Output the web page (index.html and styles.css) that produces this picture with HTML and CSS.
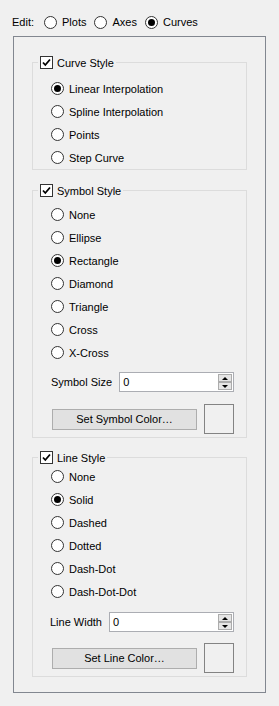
FILE: index.html
```html
<!DOCTYPE html>
<html lang="en">
<head>
	<meta charset="UTF-8">
	<title>Curve Properties</title>
	<link rel="stylesheet" href="styles.css">
</head>
<body>
	<div class="edit-row">
		<span class="edit-label">Edit:</span>
		<label class="option inline"><span class="radio"></span>Plots</label>
		<label class="option inline"><span class="radio"></span>Axes</label>
		<label class="option inline"><span class="radio checked"></span>Curves</label>
	</div>

	<div class="frame">
		<fieldset class="group group-curve">
			<legend>
				<label class="check"><span class="check-box"><svg width="11" height="11" viewBox="0 0 11 11"><path d="M2 5.5 L4.3 8 L9 2.5" fill="none" stroke="#000" stroke-width="1.8"/></svg></span>Curve Style</label>
			</legend>
			<div class="group-body">
				<label class="option"><span class="radio checked"></span>Linear Interpolation</label>
				<label class="option"><span class="radio"></span>Spline Interpolation</label>
				<label class="option"><span class="radio"></span>Points</label>
				<label class="option"><span class="radio"></span>Step Curve</label>
			</div>
		</fieldset>

		<fieldset class="group group-symbol">
			<legend>
				<label class="check"><span class="check-box"><svg width="11" height="11" viewBox="0 0 11 11"><path d="M2 5.5 L4.3 8 L9 2.5" fill="none" stroke="#000" stroke-width="1.8"/></svg></span>Symbol Style</label>
			</legend>
			<div class="group-body">
				<label class="option"><span class="radio"></span>None</label>
				<label class="option"><span class="radio"></span>Ellipse</label>
				<label class="option"><span class="radio checked"></span>Rectangle</label>
				<label class="option"><span class="radio"></span>Diamond</label>
				<label class="option"><span class="radio"></span>Triangle</label>
				<label class="option"><span class="radio"></span>Cross</label>
				<label class="option"><span class="radio"></span>X-Cross</label>

				<div class="field">
					<span class="field-label">Symbol Size</span>
					<div class="spin">
						<span class="spin-value">0</span>
						<span class="spin-buttons">
							<span class="spin-btn"><span class="arrow-up"></span></span>
							<span class="spin-btn"><span class="arrow-down"></span></span>
						</span>
					</div>
				</div>

				<div class="color-row">
					<button class="color-btn">Set Symbol Color…</button>
					<span class="swatch"></span>
				</div>
			</div>
		</fieldset>

		<fieldset class="group group-line">
			<legend>
				<label class="check"><span class="check-box"><svg width="11" height="11" viewBox="0 0 11 11"><path d="M2 5.5 L4.3 8 L9 2.5" fill="none" stroke="#000" stroke-width="1.8"/></svg></span>Line Style</label>
			</legend>
			<div class="group-body">
				<label class="option"><span class="radio"></span>None</label>
				<label class="option"><span class="radio checked"></span>Solid</label>
				<label class="option"><span class="radio"></span>Dashed</label>
				<label class="option"><span class="radio"></span>Dotted</label>
				<label class="option"><span class="radio"></span>Dash-Dot</label>
				<label class="option"><span class="radio"></span>Dash-Dot-Dot</label>

				<div class="field field-width">
					<span class="field-label">Line Width</span>
					<div class="spin">
						<span class="spin-value">0</span>
						<span class="spin-buttons">
							<span class="spin-btn"><span class="arrow-up"></span></span>
							<span class="spin-btn"><span class="arrow-down"></span></span>
						</span>
					</div>
				</div>

				<div class="color-row">
					<button class="color-btn">Set Line Color…</button>
					<span class="swatch"></span>
				</div>
			</div>
		</fieldset>
	</div>
</body>
</html>
```

FILE: styles.css
```css
body {
	margin: 0;
	width: 279px;
	height: 706px;
	overflow: hidden;
	background-color: #f0f0f0;
	color: #000;
	font-family: "Liberation Sans", Arial, sans-serif;
	font-size: 11px;
}
.edit-row {
	display: flex;
	align-items: center;
	height: 16px;
	padding: 14px 12px 0;
	margin-bottom: 6px;
}
.edit-label { margin-right: 10px; }
.option {
	display: flex;
	align-items: center;
	gap: 5px;
	height: 23px;
}
.option.inline {
	height: 16px;
	margin-right: 8px;
}
.radio {
	width: 13px;
	height: 13px;
	box-sizing: border-box;
	border: 1px solid #333;
	border-radius: 50%;
	background-color: #fff;
	display: flex;
	align-items: center;
	justify-content: center;
	flex-shrink: 0;
}
.radio.checked::after {
	content: '';
	width: 7px;
	height: 7px;
	border-radius: 50%;
	background-color: #000;
}
.frame {
	margin: 0 13px;
	border: 1px solid #828790;
	padding: 19px 18px 15px;
	display: flex;
	flex-direction: column;
}
.group {
	margin: 0;
	padding: 0;
	min-width: 0;
	border: 1px solid #dcdcdc;
}
.group-symbol { margin-top: 14px; }
.group-line { margin-top: 13px; }
legend {
	margin-left: 5px;
	padding: 0 2px;
}
.check {
	display: flex;
	align-items: center;
	gap: 4px;
	height: 13px;
}
.check-box {
	width: 13px;
	height: 13px;
	box-sizing: border-box;
	border: 1px solid #333;
	background-color: #fff;
	display: flex;
	align-items: center;
	justify-content: center;
}
.check-box svg { display: block; }
.group-body {
	display: flex;
	flex-direction: column;
	padding: 8px 12px 0 18px;
}
.group-symbol .group-body { padding: 6px 12px 3px 18px; }
.group-line .group-body { padding: 1px 12px 3px 18px; }
.field {
	display: flex;
	align-items: center;
	gap: 7px;
	height: 20px;
	margin-top: 8px;
}
.field-width {
	margin-top: 9px;
	margin-left: -1px;
}
.spin {
	flex: 1;
	height: 20px;
	box-sizing: border-box;
	border: 1px solid #abadb3;
	background-color: #fff;
	display: flex;
}
.spin-value {
	flex: 1;
	padding-left: 3px;
	line-height: 18px;
}
.spin-buttons {
	width: 14px;
	margin: 1px 1px 1px 0;
	display: flex;
	flex-direction: column;
}
.spin-btn {
	flex: 1;
	box-sizing: border-box;
	border: 1px solid #acacac;
	background-color: #e5e5e5;
	display: flex;
	align-items: center;
	justify-content: center;
}
.arrow-up, .arrow-down {
	width: 0;
	height: 0;
	border-left: 3px solid transparent;
	border-right: 3px solid transparent;
}
.arrow-up { border-bottom: 3px solid #000; }
.arrow-down { border-top: 3px solid #000; }
.color-row {
	display: flex;
	align-items: center;
	gap: 7px;
	margin-top: 12px;
	padding-left: 1px;
}
.group-line .color-row { margin-top: 11px; }
.color-btn {
	width: 145px;
	height: 21px;
	margin: 0;
	padding: 0;
	border: 1px solid #adadad;
	background-color: #e1e1e1;
	color: #000;
	font-family: inherit;
	font-size: 11px;
}
.swatch {
	width: 30px;
	height: 30px;
	box-sizing: border-box;
	border: 1px solid #838383;
	background-color: #f0f0f0;
}
```
